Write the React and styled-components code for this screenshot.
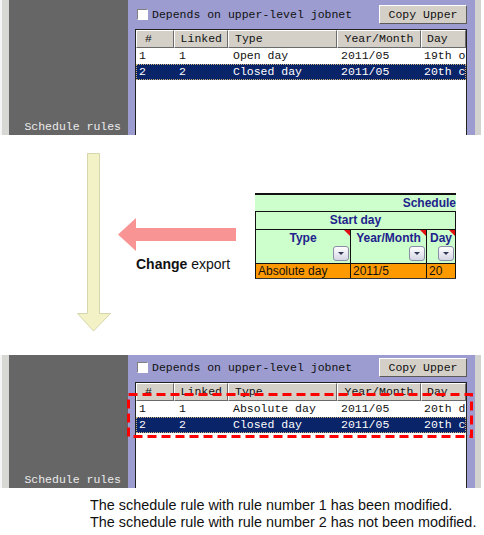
import React from "react";
import styled, { createGlobalStyle } from "styled-components";

const GlobalStyle = createGlobalStyle`
  body {
    margin: 0;
    background: #fff;
  }
`;

const before = [
  { no: "1", linked: "1", type: "Open day", ym: "2011/05", day: "19th o" },
  { no: "2", linked: "2", type: "Closed day", ym: "2011/05", day: "20th c", selected: true },
];

const after = [
  { no: "1", linked: "1", type: "Absolute day", ym: "2011/05", day: "20th d" },
  { no: "2", linked: "2", type: "Closed day", ym: "2011/05", day: "20th c", selected: true },
];

const columns = [
  { label: "#", width: 38, align: "left", pad: 8 },
  { label: "Linked", width: 54, align: "right", pad: 5 },
  { label: "Type", width: 109, align: "left", pad: 6 },
  { label: "Year/Month", width: 84, align: "center", pad: 0 },
  { label: "Day", width: 45, align: "left", pad: 5 },
];
const cellPad = [3, 5, 5, 4, 3];

function ScheduleShot({ rows, height, padTop, marked }) {
  return (
    <Shot $h={height}>
      <EdgeStrip />
      <SidePane>Schedule rules</SidePane>
      <MainPane $pt={padTop}>
        <Toolbar>
          <Check />
          <CheckLabel>Depends on upper-level jobnet</CheckLabel>
          <CopyBtn>Copy Upper</CopyBtn>
        </Toolbar>
        <Grid>
          <HeadRow>
            {columns.map((c) => (
              <HeadCell key={c.label} $w={c.width} $align={c.align} $pad={c.pad}>
                {c.label}
              </HeadCell>
            ))}
          </HeadRow>
          {rows.map((r) => (
            <Row key={r.no} $sel={r.selected}>
              {[r.no, r.linked, r.type, r.ym, r.day].map((v, i) => (
                <Cell key={i} $w={columns[i].width} $pad={cellPad[i]}>
                  {v}
                </Cell>
              ))}
            </Row>
          ))}
        </Grid>
      </MainPane>
      <RightStrip />
      {marked && (
        <Marker width="350" height="48" viewBox="0 0 350 48">
          <rect
            x="1.5"
            y="1.5"
            width="343"
            height="42"
            fill="none"
            stroke="#ff0000"
            strokeWidth="3"
            strokeDasharray="9 5"
          />
        </Marker>
      )}
    </Shot>
  );
}

function Dropdown() {
  return (
    <DropBtn>
      <DropMark />
    </DropBtn>
  );
}

function App() {
  return (
    <Page>
      <GlobalStyle />
      <ScheduleShot rows={before} height={135} padTop={5} />
      <Middle>
        <DownArrow width="34" height="179" viewBox="0 0 34 179">
          <polygon
            points="10.5,0.5 22.5,0.5 22.5,160.5 33.5,160.5 16.5,178 0.5,160.5 10.5,160.5"
            fill="#f2f2c6"
            stroke="#d6d6ae"
          />
        </DownArrow>
        <ExportBlock>
          <svg width="118" height="34" viewBox="0 0 118 34">
            <polygon points="0,16.5 18,0 18,10 118,10 118,23 18,23 18,33" fill="#f99494" />
          </svg>
          <Caption>
            <b>Change</b> export
          </Caption>
        </ExportBlock>
        <Sheet>
          <SheetTitle>Schedule</SheetTitle>
          <SheetGroup>Start day</SheetGroup>
          <SheetHead>
            <SheetHeadCell $w={95}>
              Type
              <Dropdown />
            </SheetHeadCell>
            <SheetHeadCell $w={76}>
              Year/Month
              <Dropdown />
            </SheetHeadCell>
            <SheetHeadCell $w={29}>
              Day
              <Dropdown />
            </SheetHeadCell>
          </SheetHead>
          <SheetRow>
            <SheetCell $w={95}>Absolute day</SheetCell>
            <SheetCell $w={76}>2011/5</SheetCell>
            <SheetCell $w={29}>20</SheetCell>
          </SheetRow>
        </Sheet>
      </Middle>
      <ScheduleShot rows={after} height={133} padTop={3} marked />
      <Note>
        <div>The schedule rule with rule number 1 has been modified.</div>
        <div>The schedule rule with rule number 2 has not been modified.</div>
      </Note>
    </Page>
  );
}

// styled components

const Page = styled.div`
  width: 484px;
  height: 535px;
  overflow: hidden;
  background: #fff;
`;

const Shot = styled.div`
  position: relative;
  display: flex;
  width: 481px;
  height: ${(p) => p.$h}px;
`;

const EdgeStrip = styled.div`
  width: 9px;
  background: linear-gradient(to right, #f4f4f4 0 2px, #d7d7d3 2px);
`;

const SidePane = styled.div`
  width: 112px;
  background: #666666;
  display: flex;
  align-items: flex-end;
  justify-content: flex-end;
  padding: 0 7px 1px 0;
  color: #ececec;
  font: 11.5px/14px "Liberation Mono", monospace;
`;

const MainPane = styled.div`
  width: 332px;
  background: #9c9cd0;
  padding: ${(p) => p.$pt}px 8px 0 7px;
  display: flex;
  flex-direction: column;
  overflow: hidden;
`;

const RightStrip = styled.div`
  width: 6px;
  background: #d2d2ce;
`;

const Toolbar = styled.div`
  display: flex;
  align-items: center;
  height: 19px;
  margin-bottom: 5px;
  font: 11.5px/14px "Liberation Mono", monospace;
  color: #111;
`;

const Check = styled.span`
  width: 9px;
  height: 9px;
  margin-left: 2px;
  background: #fff;
  border: 1px solid;
  border-color: #808080 #fff #fff #808080;
`;

const CheckLabel = styled.span`
  margin-left: 4px;
  flex: 1;
  white-space: nowrap;
`;

const CopyBtn = styled.div`
  width: 86px;
  height: 17px;
  background: #d4d0c8;
  border: 1px solid;
  border-color: #fff #5a5a5a #5a5a5a #fff;
  display: flex;
  align-items: center;
  justify-content: center;
  white-space: nowrap;
`;

const Grid = styled.div`
  flex: 1;
  background: #fff;
  border: 1px solid #222;
  border-bottom: none;
  font: 11.5px/14px "Liberation Mono", monospace;
  overflow: hidden;
`;

const HeadRow = styled.div`
  display: flex;
  height: 18px;
`;

const HeadCell = styled.div`
  width: ${(p) => p.$w}px;
  flex: none;
  box-sizing: border-box;
  background: #d4d0c8;
  border: 1px solid;
  border-color: #fff #6a6a6a #6a6a6a #fff;
  color: #111;
  text-align: ${(p) => p.$align};
  padding: 1px ${(p) => (p.$align === "right" ? p.$pad : 0)}px 0
    ${(p) => (p.$align === "left" ? p.$pad : 0)}px;
  white-space: nowrap;
`;

const Row = styled.div`
  display: flex;
  height: 16px;
  align-items: center;
  background: ${(p) => (p.$sel ? "#0a246a" : "#fff")};
  color: ${(p) => (p.$sel ? "#fff" : "#111")};
  outline: ${(p) => (p.$sel ? "1px dotted #c8b27a" : "none")};
  outline-offset: -1px;
`;

const Cell = styled.div`
  width: ${(p) => p.$w}px;
  flex: none;
  box-sizing: border-box;
  padding-left: ${(p) => p.$pad}px;
  white-space: nowrap;
`;

const Marker = styled.svg`
  position: absolute;
  left: 127px;
  top: 38px;
`;

const Middle = styled.div`
  display: flex;
  align-items: flex-start;
  height: 220px;
  padding-top: 18px;
  box-sizing: border-box;
`;

const DownArrow = styled.svg`
  margin-left: 77px;
  flex: none;
`;

const ExportBlock = styled.div`
  margin-left: 7px;
  margin-top: 65px;
  width: 118px;
  display: flex;
  flex-direction: column;
`;

const Caption = styled.div`
  margin: 4px 0 0 18px;
  font: 14px/17px "Liberation Sans", Arial, sans-serif;
  color: #111;
  white-space: nowrap;
`;

const Sheet = styled.div`
  margin-left: 19px;
  margin-top: 40px;
  width: 201px;
  border-top: 2px solid #111;
  font: bold 12px/15px "Liberation Sans", Arial, sans-serif;
  color: #22228c;
  overflow: hidden;
`;

const SheetTitle = styled.div`
  height: 16px;
  background: #ccffcc;
  text-align: right;
  white-space: nowrap;
  line-height: 16px;
`;

const SheetGroup = styled.div`
  height: 17px;
  background: #ccffcc;
  border: 1px solid #111;
  border-bottom: none;
  text-align: center;
  line-height: 17px;
`;

const SheetHead = styled.div`
  display: flex;
  height: 33px;
  background: #ccffcc;
  border-top: 1px solid #111;
  border-left: 1px solid #111;
`;

const SheetHeadCell = styled.div`
  position: relative;
  width: ${(p) => p.$w}px;
  box-sizing: border-box;
  border-right: 1px solid #111;
  display: flex;
  flex-direction: column;
  align-items: center;
  padding-top: 1px;
  white-space: nowrap;

  &::after {
    content: "";
    position: absolute;
    top: 0;
    right: 0;
    border-top: 6px solid #e01010;
    border-left: 6px solid transparent;
  }
`;

const DropBtn = styled.div`
  align-self: flex-end;
  margin: auto 1px 2px 0;
  width: 14px;
  height: 14px;
  border: 1px solid #8c8ca8;
  border-radius: 3px;
  background: linear-gradient(#ffffff, #d4d6e4);
  display: flex;
  align-items: center;
  justify-content: center;
`;

const DropMark = styled.span`
  width: 0;
  height: 0;
  border-left: 3px solid transparent;
  border-right: 3px solid transparent;
  border-top: 3px solid #333a55;
`;

const SheetRow = styled.div`
  display: flex;
  height: 14px;
  background: #ff9900;
  border-top: 1px solid #111;
  border-bottom: 1px solid #333;
  border-left: 1px solid #111;
  font: 12px/15px "Liberation Sans", Arial, sans-serif;
  color: #111;
`;

const SheetCell = styled.div`
  width: ${(p) => p.$w}px;
  box-sizing: border-box;
  border-right: 1px solid #111;
  padding-left: 2px;
  white-space: nowrap;
  overflow: hidden;
`;

const Note = styled.div`
  margin: 9px 0 0 90px;
  font: 14.4px/17px "Liberation Sans", Arial, sans-serif;
  color: #111;
  white-space: nowrap;
`;

export default App;
